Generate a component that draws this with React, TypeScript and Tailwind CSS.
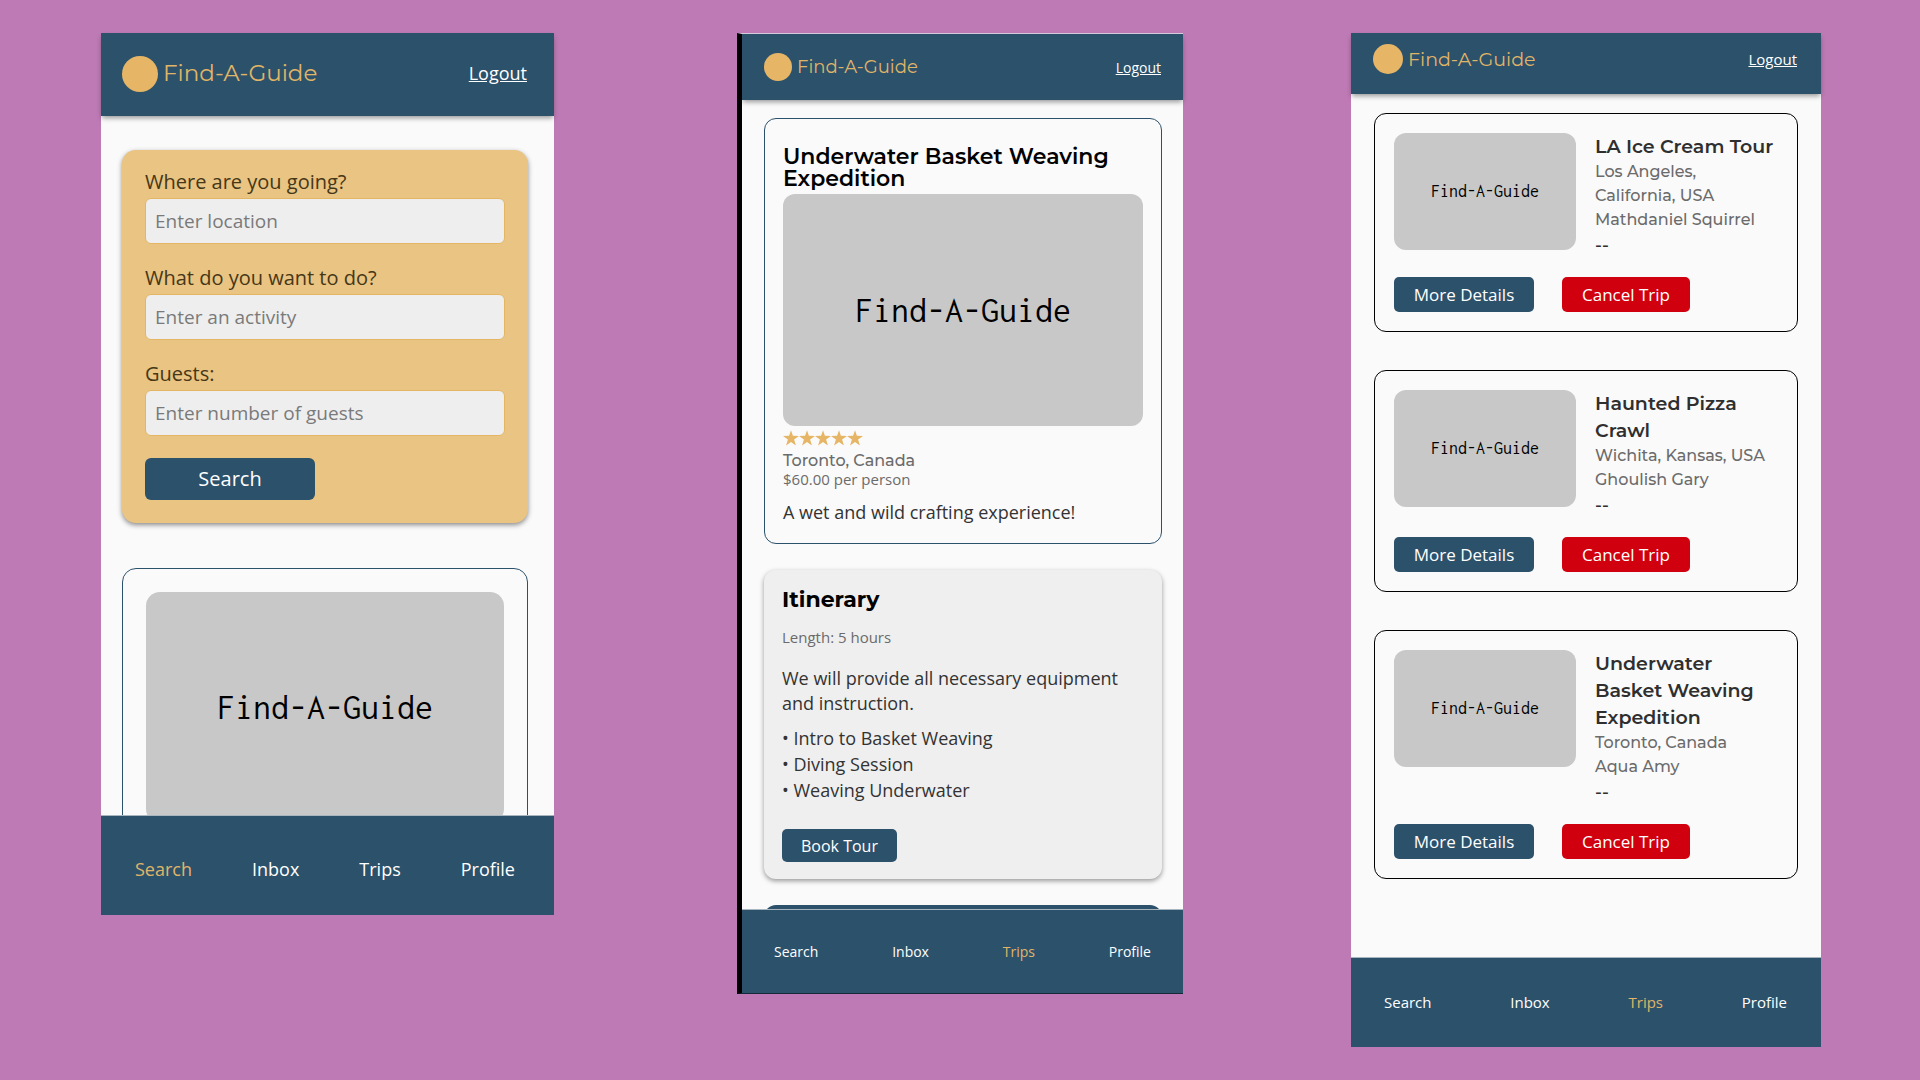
import { useId, type ReactNode } from "react";
import clsx from "clsx";

const SANS = "font-['Open_Sans','Noto_Sans',sans-serif]";
const DISPLAY = "font-['Montserrat','Inter',sans-serif]";
const MONO = "font-['Inconsolata','Liberation_Mono',monospace]";

type TabName = "Search" | "Inbox" | "Trips" | "Profile";
const TABS: TabName[] = ["Search", "Inbox", "Trips", "Profile"];

function Header({ className, dot, brand, link }: { className: string; dot: string; brand: string; link: string }) {
  return (
    <header
      className={clsx("relative z-10 flex items-center justify-between bg-[#2c516b] shadow-[0_3px_5px_-1px_rgba(0,0,0,0.4)]", className)}
    >
      <div className="flex items-center gap-[5px]">
        <span className={clsx("rounded-full bg-[#e6b666]", dot)} />
        <span className={clsx(DISPLAY, "leading-none text-[#e0b567]", brand)}>Find-A-Guide</span>
      </div>
      <a href="#logout" className={clsx("text-white underline", link)}>
        Logout
      </a>
    </header>
  );
}

function TabBar({ active, className }: { active: TabName; className: string }) {
  return (
    <nav className={clsx("relative z-10 flex items-center justify-between border-t border-[#a9b5be] bg-[#2c516b]", className)}>
      {TABS.map((tab) => (
        <a key={tab} href={"#" + tab.toLowerCase()} className={tab === active ? "text-[#e0b567]" : "text-white"}>
          {tab}
        </a>
      ))}
    </nav>
  );
}

function Placeholder({ className }: { className: string }) {
  return (
    <div className={clsx(MONO, "flex items-center justify-center bg-[#c8c8c8] text-black", className)}>Find-A-Guide</div>
  );
}

function Field({ label, placeholder }: { label: string; placeholder: string }) {
  const id = useId();
  return (
    <div className="mb-5 flex flex-col gap-0.5">
      <label htmlFor={id} className="text-[20px] leading-7 text-[#463717]">
        {label}
      </label>
      <input
        id={id}
        type="text"
        placeholder={placeholder}
        className="h-[46px] rounded-md border border-[#e4b664] bg-[#eeeeee] px-[9px] text-[19px] text-[#333333] placeholder:text-[#7a7a7a]"
      />
    </div>
  );
}

function SearchPhone() {
  return (
    <section className="bg-[#fafafa]">
      <Header className="h-[83px] pb-0.5 pl-[21px] pr-[27px]" dot="size-9" brand="text-[23px]" link="text-[18px]" />
      <main className="h-[699px] overflow-hidden pt-[34px] pr-[26px] pl-[21px]">
        <form className="rounded-[14px] bg-[#e9c483] px-[23px] pt-[18px] pb-[23px] shadow-[0_2px_5px_rgba(0,0,0,0.45)]">
          <Field label="Where are you going?" placeholder="Enter location" />
          <Field label="What do you want to do?" placeholder="Enter an activity" />
          <Field label="Guests:" placeholder="Enter number of guests" />
          <button type="button" className="mt-0.5 h-[42px] w-[170px] rounded-md bg-[#2c516b] text-[20px] text-white">
            Search
          </button>
        </form>
        <article className="mt-[45px] rounded-[14px] border border-[#2c516b] p-[23px]">
          <Placeholder className="aspect-[357/230] rounded-[14px] text-[36px]" />
        </article>
      </main>
      <TabBar active="Search" className="h-[100px] pt-2 pr-[39px] pl-[34px] text-[18px]" />
    </section>
  );
}

function Star() {
  return (
    <svg viewBox="0 0 16 16" className="size-4 fill-[#e6b666]" aria-hidden="true">
      <path d="M8 0.2 9.9 5.8 16 5.9 11.1 9.5 12.9 15.4 8 11.9 3.1 15.4 4.9 9.5 0 5.9 6.1 5.8Z" />
    </svg>
  );
}

function TourPhone() {
  return (
    <section className="border-t border-b border-l-[5px] border-t-[#d9cfe0] border-b-[#14283a] border-l-black bg-[#fafafa]">
      <Header className="h-[66px] px-[22px]" dot="size-7" brand="text-[18px]" link="text-[14px]" />
      <main className="h-[809px] overflow-hidden pt-[18px] pr-[21px] pl-[22px] text-[#333333]">
        <article className="rounded-[12px] border border-[#2c516b] px-[18px] pt-[27px] pb-[18px]">
          <h2 className={clsx(DISPLAY, "text-[22px] leading-[22px] font-semibold text-black")}>
            Underwater Basket Weaving Expedition
          </h2>
          <Placeholder className="mt-1 aspect-[360/232] rounded-[12px] text-[36px]" />
          <div className="mt-1 flex h-[17px]">
            <Star />
            <Star />
            <Star />
            <Star />
            <Star />
          </div>
          <p className={clsx(DISPLAY, "mt-1 text-[16px] leading-[19px] font-medium text-[#6b6b6b]")}>Toronto, Canada</p>
          <p className="text-[15px] leading-[19px] text-[#6b6b6b]">$60.00 per person</p>
          <p className="mt-[10px] text-[18px] leading-[26px]">A wet and wild crafting experience!</p>
        </article>
        <article className="mt-[26px] rounded-[12px] bg-[#efefef] px-[18px] pt-4 pb-[17px] shadow-[0_2px_5px_rgba(0,0,0,0.4)]">
          <h2 className={clsx(DISPLAY, "text-[22px] leading-7 font-bold text-black")}>Itinerary</h2>
          <p className="mt-[11px] text-[15px] leading-6 text-[#6b6b6b]">Length: 5 hours</p>
          <p className="mt-[17px] text-[18px] leading-[25px]">We will provide all necessary equipment and instruction.</p>
          <ul className="mt-[9px] text-[18px] leading-[26px]">
            <li>• Intro to Basket Weaving</li>
            <li>• Diving Session</li>
            <li>• Weaving Underwater</li>
          </ul>
          <button type="button" className="mt-[26px] h-[33px] w-[115px] rounded-[5px] bg-[#2c516b] text-[16px] text-white">
            Book Tour
          </button>
        </article>
        <div className="mt-[26px] h-10 rounded-[12px] bg-[#2c516b]" />
      </main>
      <TabBar active="Trips" className="h-[84px] px-8 text-[14px]" />
    </section>
  );
}

const TRIPS = [
  { title: "LA Ice Cream Tour", place: "Los Angeles, California, USA", guide: "Mathdaniel Squirrel" },
  { title: "Haunted Pizza Crawl", place: "Wichita, Kansas, USA", guide: "Ghoulish Gary" },
  { title: "Underwater Basket Weaving Expedition", place: "Toronto, Canada", guide: "Aqua Amy" },
];

function Action({ children, className }: { children: ReactNode; className: string }) {
  return (
    <button type="button" className={clsx("h-[35px] rounded-[5px] text-[17px] text-white", className)}>
      {children}
    </button>
  );
}

function TripsPhone() {
  return (
    <section className="bg-[#fafafa]">
      <Header className="pt-[11px] pr-[24px] pb-[20px] pl-[22px]" dot="size-[30px]" brand="text-[19px]" link="text-[15px]" />
      <main className="flex flex-col gap-[38px] pt-[19px] pr-[23px] pb-[78px] pl-[23px]">
        {TRIPS.map((trip) => (
          <article key={trip.title} className="rounded-[12px] border border-black p-[19px]">
            <div className="flex gap-[19px]">
              <Placeholder className="h-[117px] w-[182px] shrink-0 rounded-[12px] text-[18px]" />
              <div className={clsx(DISPLAY, "min-w-0 text-[16px] leading-6 font-medium text-[#6b6b6b]")}>
                <h3 className="text-[19px] leading-[27px] font-semibold text-[#2f2f2f]">{trip.title}</h3>
                <p>{trip.place}</p>
                <p>{trip.guide}</p>
                <p className="text-[18px] leading-[26px] text-[#2f2f2f]">--</p>
              </div>
            </div>
            <div className="mt-[19px] flex gap-7">
              <Action className="w-[140px] bg-[#2c516b]">More Details</Action>
              <Action className="w-[128px] bg-[#d0000f]">Cancel Trip</Action>
            </div>
          </article>
        ))}
      </main>
      <TabBar active="Trips" className="h-[90px] pr-[34px] pl-[33px] text-[15px]" />
    </section>
  );
}

export default function App() {
  return (
    <div
      className={clsx(
        SANS,
        "grid min-h-screen grid-cols-[636fr_614fr_470fr] items-start bg-[#bd7ab4] pt-[33px] pr-[99px] pb-[32px] pl-[101px]",
      )}
    >
      <div className="min-w-0 pr-[183px]">
        <SearchPhone />
      </div>
      <div className="min-w-0 pr-[168px]">
        <TourPhone />
      </div>
      <div className="min-w-0">
        <TripsPhone />
      </div>
    </div>
  );
}
